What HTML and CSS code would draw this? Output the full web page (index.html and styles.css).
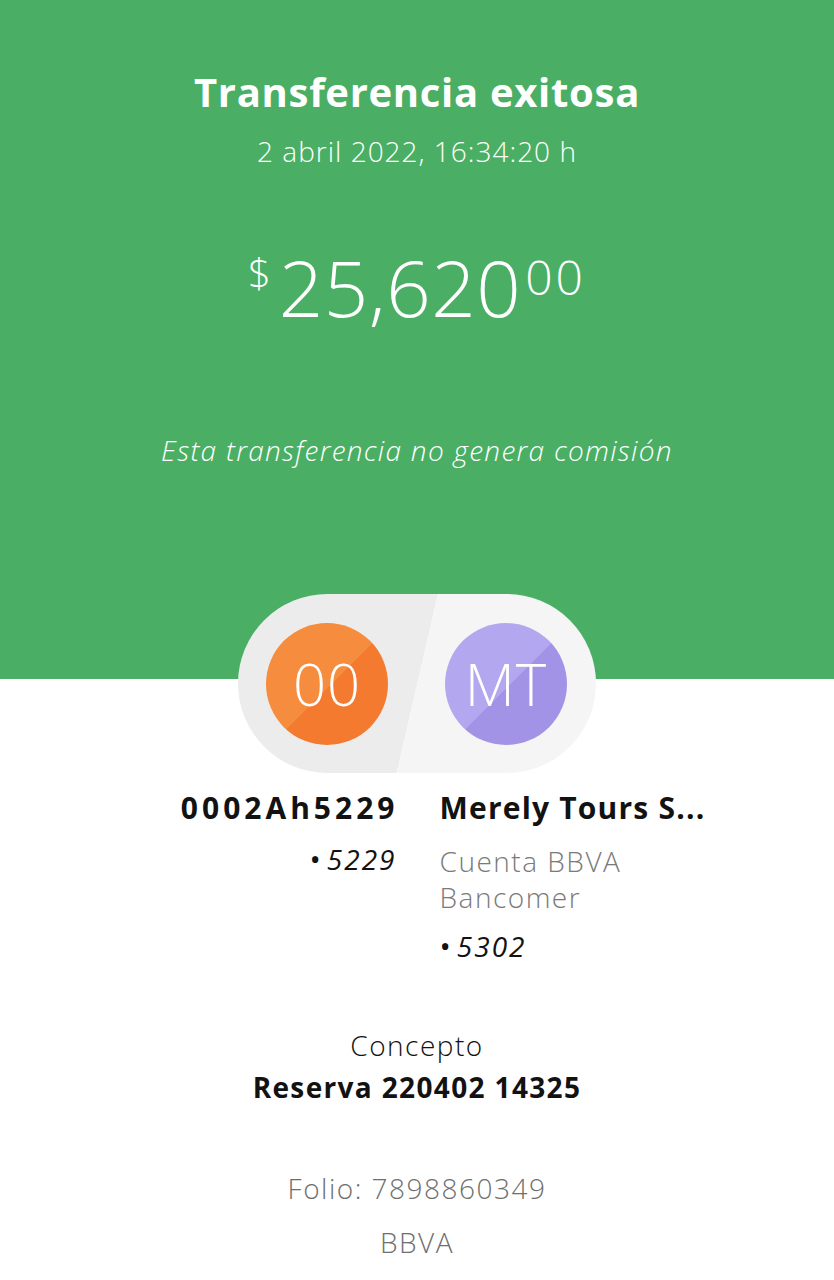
FILE: index.html
```html
<!DOCTYPE html>
<html lang="es">
<head>
<meta charset="utf-8">
<title>Transferencia exitosa</title>
<link rel="stylesheet" href="styles.css">
</head>
<body>
<main class="page">
  <section class="hero">
    <h1 class="title">Transferencia exitosa</h1>
    <p class="date">2 abril 2022, 16:34:20 h</p>
    <p class="amount"><span class="cur">$</span><span class="int">25,620</span><span class="dec">00</span></p>
    <p class="note">Esta transferencia no genera comisión</p>
  </section>

  <div class="pill">
    <div class="avatar orange">00</div>
    <div class="avatar purple">MT</div>
  </div>

  <section class="parties">
    <div class="party left">
      <div class="name id">0002Ah5229</div>
      <div class="acct"><span class="dot">•</span>5229</div>
    </div>
    <div class="party right">
      <div class="name">Merely Tours S...</div>
      <div class="bank">Cuenta BBVA<br>Bancomer</div>
      <div class="acct"><span class="dot">•</span>5302</div>
    </div>
  </section>

  <section class="concept">
    <div class="label">Concepto</div>
    <div class="value">Reserva 220402 14325</div>
  </section>

  <section class="footer">
    <div class="folio">Folio: 7898860349</div>
    <div class="brand">BBVA</div>
  </section>
</main>
</body>
</html>
```

FILE: styles.css
```css
* { box-sizing: border-box; }
html, body { margin: 0; padding: 0; }
body {
  width: 834px;
  min-height: 1280px;
  font-family: "Open Sans", Lato, sans-serif;
  color: #121212;
  background: linear-gradient(to bottom, #4aaf64 0, #4aaf64 679px, #ffffff 679px);
}
.page {
  display: flex;
  flex-direction: column;
  align-items: center;
}
.hero {
  display: flex;
  flex-direction: column;
  align-items: center;
  color: #fff;
  padding-top: 66px;
}
.title {
  margin: 0;
  font-size: 40px;
  font-weight: 700;
  line-height: 52px;
  letter-spacing: 0.7px;
}
.date {
  margin: 16px 0 0;
  font-size: 28px;
  font-weight: 300;
  line-height: 34px;
  letter-spacing: 1px;
}
.amount {
  margin: 80px 0 0;
  display: flex;
  align-items: flex-start;
  font-weight: 300;
  line-height: 1;
}
.cur { font-size: 40px; margin-top: 5px; margin-right: 8px; }
.int { font-size: 78px; letter-spacing: 0.5px; }
.dec { font-size: 48px; margin-top: 5px; margin-left: 4px; letter-spacing: 3px; }
.note {
  margin: 107px 0 0;
  font-size: 28px;
  font-style: italic;
  font-weight: 300;
  line-height: 34px;
  letter-spacing: 1.3px;
}
.pill {
  margin-top: 127px;
  width: 358px;
  height: 179px;
  border-radius: 90px;
  background: linear-gradient(103deg, #ececec 50%, #f5f5f5 50%);
  display: flex;
  align-items: center;
  justify-content: space-between;
  padding: 0 29px 0 28px;
}
.avatar {
  width: 122px;
  height: 122px;
  border-radius: 50%;
  display: flex;
  align-items: center;
  justify-content: center;
  color: #fff;
  font-size: 58px;
  font-weight: 300;
  letter-spacing: 1px;
}
.orange { background: linear-gradient(135deg, #f68c3e 52%, #f37a2e 52%); }
.purple { background: linear-gradient(135deg, #b3a8ef 52%, #a293e6 52%); }

.parties {
  margin-top: 16px;
  width: 834px;
  display: grid;
  grid-template-columns: 1fr 1fr;
  column-gap: 45px;
}
.party { display: flex; flex-direction: column; }
.left { align-items: flex-end; text-align: right; }
.right { align-items: flex-start; text-align: left; }
.name {
  font-size: 30px;
  font-weight: 700;
  line-height: 38px;
  letter-spacing: 1.2px;
}
.name.id { letter-spacing: 4px; margin-right: -4px; }
.acct {
  font-size: 28px;
  font-style: italic;
  line-height: 36px;
  margin-top: 14px;
  letter-spacing: 2px;
}
.dot { font-style: normal; font-size: 30px; margin-right: 4px; }
.left .acct { margin-right: -2px; }
.right .acct { margin-top: 13px; }
.bank {
  margin-top: 16px;
  font-size: 28px;
  font-weight: 300;
  line-height: 36px;
  color: #7a7a7a;
  letter-spacing: 1.5px;
}
.concept {
  margin-top: 63px;
  display: flex;
  flex-direction: column;
  align-items: center;
}
.label { font-size: 28px; font-weight: 300; line-height: 36px; letter-spacing: 1.5px; }
.value { font-size: 28px; font-weight: 700; line-height: 36px; margin-top: 6px; letter-spacing: 1.35px; }
.footer {
  margin-top: 65px;
  display: flex;
  flex-direction: column;
  align-items: center;
  color: #6f6f6f;
  font-size: 28px;
  font-weight: 300;
  line-height: 36px;
  letter-spacing: 1.5px;
}
.brand { margin-top: 18px; }
```
